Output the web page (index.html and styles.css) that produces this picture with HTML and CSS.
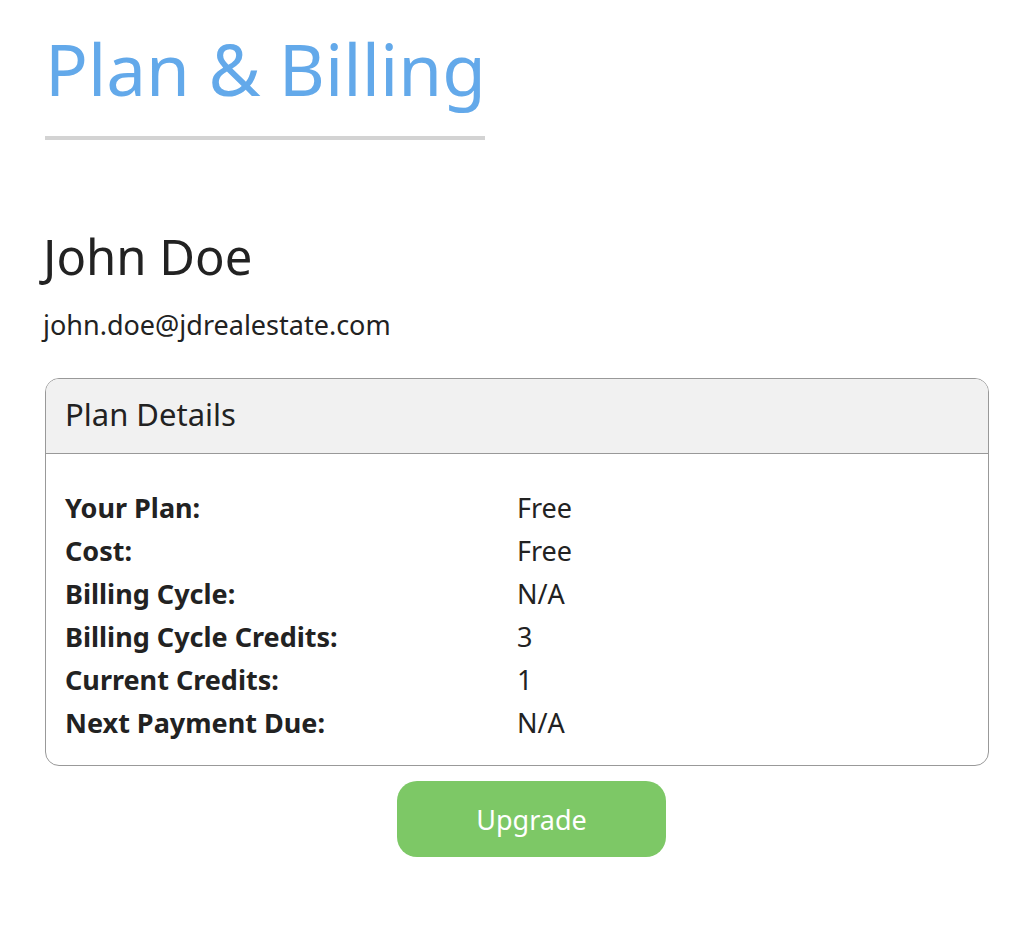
FILE: index.html
```html
<!DOCTYPE html>
<html>
<head>
<meta charset="utf-8">
<link rel="stylesheet" href="styles.css">
</head>
<body>
<div class="page">
  <h1 class="title">Plan &amp; Billing</h1>
  <h2 class="name">John Doe</h2>
  <p class="email">john.doe@jdrealestate.com</p>
  <div class="card">
    <div class="card-header">Plan Details</div>
    <div class="card-body">
      <div class="row"><span class="label">Your Plan:</span><span class="value">Free</span></div>
      <div class="row"><span class="label">Cost:</span><span class="value">Free</span></div>
      <div class="row"><span class="label">Billing Cycle:</span><span class="value">N/A</span></div>
      <div class="row"><span class="label">Billing Cycle Credits:</span><span class="value">3</span></div>
      <div class="row"><span class="label">Current Credits:</span><span class="value">1</span></div>
      <div class="row"><span class="label">Next Payment Due:</span><span class="value">N/A</span></div>
    </div>
  </div>
  <div class="actions">
    <button class="btn-upgrade">Upgrade</button>
  </div>
</div>
</body>
</html>
```

FILE: styles.css
```css
html, body {
  margin: 0;
  padding: 0;
  background: #ffffff;
}
body {
  font-family: "Noto Sans", "Open Sans", sans-serif;
  color: #222222;
}
.page {
  padding: 29px 35px 0 45px;
  width: 944px;
}
.title {
  margin: 0;
  width: 440px;
  font-size: 71px;
  font-weight: 400;
  line-height: 80px;
  color: #63a9ea;
  padding-bottom: 27px;
  border-bottom: 4px solid #d3d3d3;
  box-sizing: content-box;
  white-space: nowrap;
}
.name {
  margin: 88px 0 0 -2px;
  font-size: 49px;
  font-weight: 400;
  line-height: 56px;
}
.email {
  margin: 25px 0 0 -2px;
  font-size: 27px;
  line-height: 32px;
}
.card {
  margin-top: 37px;
  border: 1.5px solid #999999;
  border-radius: 14px;
  overflow: hidden;
}
.card-header {
  background: #f1f1f1;
  border-bottom: 1.5px solid #999999;
  height: 74px;
  line-height: 70px;
  padding: 0 19px;
  font-size: 31px;
}
.card-body {
  padding: 32px 19px 21px;
}
.row {
  display: grid;
  grid-template-columns: 452px 1fr;
  font-size: 27px;
  line-height: 43px;
}
.label {
  font-weight: 700;
}
.actions {
  display: flex;
  justify-content: center;
  padding-left: 29px;
  margin-top: 15px;
}
.btn-upgrade {
  width: 269px;
  height: 76px;
  border: none;
  border-radius: 20px;
  background: #7dc866;
  color: #ffffff;
  font-family: "Noto Sans", "Open Sans", sans-serif;
  font-size: 27px;
}
```
